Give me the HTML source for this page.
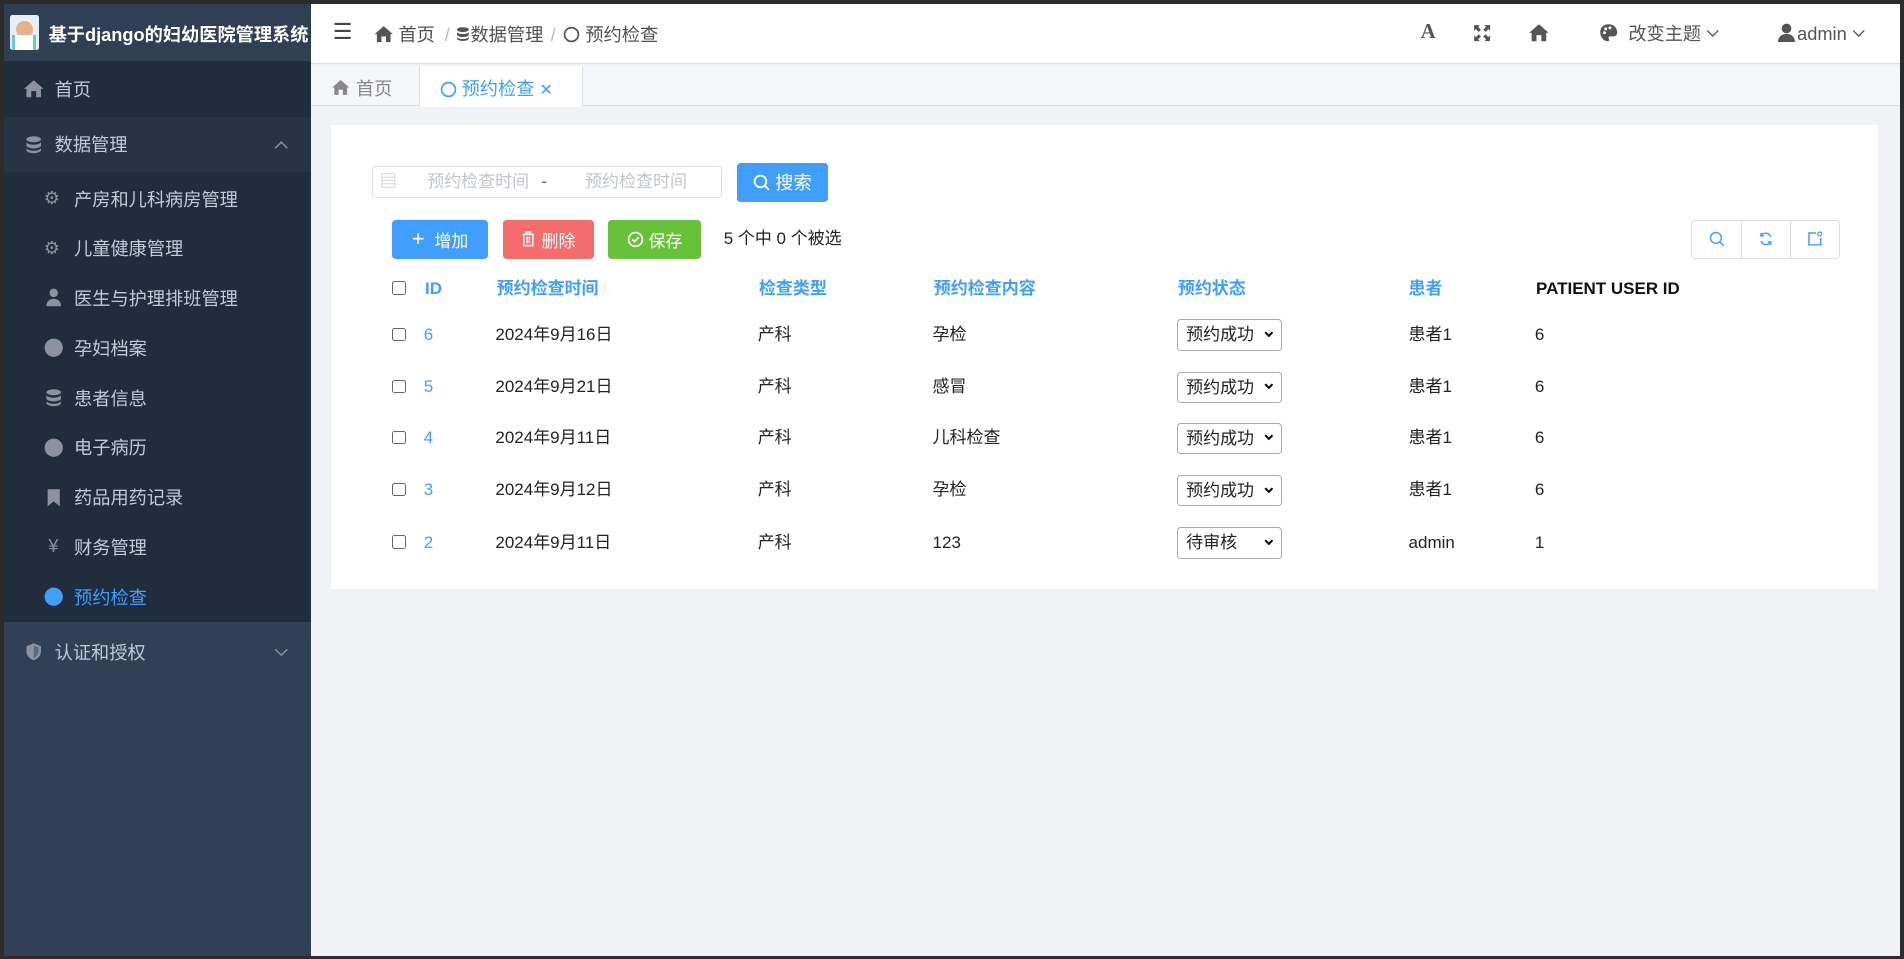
<!DOCTYPE html>
<html><head><meta charset="utf-8"><style>
*{box-sizing:border-box;margin:0;padding:0}
html,body{width:1904px;height:959px;overflow:hidden;background:#2b2b2b}
body{font-family:"Liberation Sans","Noto Sans CJK SC",sans-serif}
#w{zoom:1.21428;width:1568px;height:790px;position:relative}
.a{position:absolute}
.side{left:3px;top:3px;width:253px;height:784px;background:#304156}
.mi{position:absolute;left:0;width:253px;color:#bfcbd9;font-size:15px;display:flex;align-items:center}
.sub{left:0;width:253px;font-size:15px;color:#bfcbd9;position:absolute;display:flex;align-items:center;padding-left:33px;height:41px}
.ic{width:16px;height:16px;display:inline-block;margin-right:9px;color:#8b93a1;line-height:16px}
.main{left:256px;top:3px;width:1309px;height:784px;background:#f0f2f5}
.bc{font-size:15px;color:#505050}
.btn{position:absolute;top:181px;height:32px;color:#fff;font-size:14px;display:flex;align-items:center;justify-content:center;border-radius:3px}
.row{position:absolute;left:0;width:1274px;font-size:14px;color:#222;height:20px}
.row span{position:absolute;top:0;line-height:20px;height:20px;white-space:nowrap}
.sel{position:absolute;left:696px;top:-3px;width:87px;height:26px;border:1px solid #aaa;border-radius:3px;font-size:14px;line-height:24px;padding-left:7px;background:#fff}
.sel svg{position:absolute;right:6px;top:9px}
.cb{width:11px;height:11px;border:1px solid #666;border-radius:2px;display:inline-block;vertical-align:middle;margin-top:-2px}
.chev{display:inline-block;vertical-align:2px;margin-left:4px}
</style></head><body><div id="w">
<div class="a side">
 <div class="a" style="left:0;top:0;width:253px;height:47px;background:#2f4055"></div>
 <div class="a" style="left:5px;top:9px;width:24px;height:29px;background:#e8eef2;border-radius:2px;overflow:hidden"><div class="a" style="left:5px;top:5px;width:14px;height:14px;border-radius:50%;background:#e3b38d"></div><div class="a" style="left:2px;top:17px;width:20px;height:14px;background:#fff;border-left:3px solid #6cc;border-right:3px solid #6cc"></div></div>
 <div class="a" style="left:37px;top:14px;color:#fff;font-weight:bold;font-size:15px;white-space:nowrap">基于django的妇幼医院管理系统</div>
 <div class="mi" style="top:47px;height:46px;background:#1f2d3d;padding-left:17px"><svg class="ic" viewBox="0 0 16 16"><path d="M8 1L0 8h2v7h4v-5h4v5h4V8h2z" fill="#8b93a1"/></svg>首页</div>
 <div class="mi" style="top:93px;height:46px;background:#263445;padding-left:17px"><svg class="ic" viewBox="0 0 16 16"><ellipse cx="8" cy="3.5" rx="6" ry="2.5" fill="#8b93a1"/><path d="M2 5.5v3c0 1.4 2.7 2.5 6 2.5s6-1.1 6-2.5v-3c0 1.4-2.7 2.5-6 2.5S2 7 2 5.5zM2 10.5v2c0 1.4 2.7 2.5 6 2.5s6-1.1 6-2.5v-2c0 1.4-2.7 2.5-6 2.5s-6-1.1-6-2.5z" fill="#8b93a1"/></svg>数据管理<svg class="a" style="right:18px;top:20px" width="12" height="7" viewBox="0 0 12 7"><path d="M1 6l5-5 5 5" fill="none" stroke="#8b93a1" stroke-width="1.2"/></svg></div>
 <div class="a" style="left:0;top:139px;width:253px;height:370px;background:#1f2d3d"></div>
 <div class="sub" style="top:140px"><span class="ic">⚙</span>产房和儿科病房管理</div>
 <div class="sub" style="top:181px"><span class="ic">⚙</span>儿童健康管理</div>
 <div class="sub" style="top:222px"><svg class="ic" viewBox="0 0 16 16"><circle cx="8" cy="4" r="3.5" fill="#8b93a1"/><path d="M2 15c0-4 2.5-6 6-6s6 2 6 6z" fill="#8b93a1"/></svg>医生与护理排班管理</div>
 <div class="sub" style="top:263px"><svg class="ic" viewBox="0 0 16 16"><circle cx="8" cy="8" r="7.5" fill="#8b93a1"/></svg>孕妇档案</div>
 <div class="sub" style="top:304px"><svg class="ic" viewBox="0 0 16 16"><ellipse cx="8" cy="3.5" rx="6" ry="2.5" fill="#8b93a1"/><path d="M2 5.5v3c0 1.4 2.7 2.5 6 2.5s6-1.1 6-2.5v-3c0 1.4-2.7 2.5-6 2.5S2 7 2 5.5zM2 10.5v2c0 1.4 2.7 2.5 6 2.5s6-1.1 6-2.5v-2c0 1.4-2.7 2.5-6 2.5s-6-1.1-6-2.5z" fill="#8b93a1"/></svg>患者信息</div>
 <div class="sub" style="top:345px"><svg class="ic" viewBox="0 0 16 16"><circle cx="8" cy="8" r="7.5" fill="#8b93a1"/></svg>电子病历</div>
 <div class="sub" style="top:386px"><svg class="ic" viewBox="0 0 16 16"><path d="M3 1h10v14l-5-4-5 4z" fill="#8b93a1"/></svg>药品用药记录</div>
 <div class="sub" style="top:427px"><span class="ic" style="text-align:center">¥</span>财务管理</div>
 <div class="sub" style="top:468px;color:#409eff"><svg class="ic" viewBox="0 0 16 16"><circle cx="8" cy="8" r="7.5" fill="#409eff"/></svg>预约检查</div>
 <div class="mi" style="top:509px;height:50px;padding-left:17px"><svg class="ic" viewBox="0 0 16 16"><path d="M8 1l6 2.5v4c0 4-3 6.5-6 7.5-3-1-6-3.5-6-7.5v-4z" fill="#8b93a1"/><path d="M8 3v10.5c2-1 4-3 4-6v-3z" fill="#304156" opacity=".5"/></svg>认证和授权<svg class="a" style="right:18px;top:22px" width="12" height="7" viewBox="0 0 12 7"><path d="M1 1l5 5 5-5" fill="none" stroke="#8b93a1" stroke-width="1.2"/></svg></div>
</div>
<div class="a main">
 <div class="a" style="left:0;top:0;width:1309px;height:50px;background:#fff;border-bottom:1px solid #dcdfe6"></div>
 <div class="a" style="left:18px;top:13px;font-size:18px;color:#444">☰</div>
 <div class="a bc" style="left:52px;top:14px;white-space:nowrap"><svg width="16" height="15" viewBox="0 0 16 16" style="vertical-align:-2px"><path d="M8 1L0 8h2v7h4v-5h4v5h4V8h2z" fill="#555"/></svg> 首页 <span style="color:#bbb;margin:0 4px">/</span><svg width="13" height="15" viewBox="0 0 16 16" style="vertical-align:-2px"><ellipse cx="8" cy="3.5" rx="6" ry="2.5" fill="#555"/><path d="M2 5.5v3c0 1.4 2.7 2.5 6 2.5s6-1.1 6-2.5v-3c0 1.4-2.7 2.5-6 2.5S2 7 2 5.5zM2 10.5v2c0 1.4 2.7 2.5 6 2.5s6-1.1 6-2.5v-2c0 1.4-2.7 2.5-6 2.5s-6-1.1-6-2.5z" fill="#555"/></svg>数据管理 <span style="color:#bbb;margin:0 2px">/</span> <svg width="14" height="14" viewBox="0 0 16 16" style="vertical-align:-2px"><circle cx="8" cy="8" r="6.5" fill="none" stroke="#555" stroke-width="1.6"/></svg> 预约检查</div>
 <div class="a" style="left:914px;top:14px;font:bold 17px 'Liberation Serif',serif;color:#555">A</div>
 <svg class="a" style="left:957px;top:17px" width="15" height="15" viewBox="0 0 16 16"><path d="M1 1h5L4.5 2.5 7 5 5 7 2.5 4.5 1 6zM15 1v5l-1.5-1.5L11 7 9 5l2.5-2.5L10 1zM1 15v-5l1.5 1.5L5 9l2 2-2.5 2.5L6 15zM15 15h-5l1.5-1.5L9 11l2-2 2.5 2.5L15 10z" fill="#555"/></svg>
 <svg class="a" style="left:1002px;top:16px" width="18" height="16" viewBox="0 0 16 16"><path d="M8 1L0 8h2v7h4v-5h4v5h4V8h2z" fill="#555"/></svg>
 <svg class="a" style="left:1061px;top:16px" width="16" height="16" viewBox="0 0 16 16"><path d="M8 1C3.5 1 1 4 1 7.5S3.5 15 7 15c1.5 0 1.5-1 1-2s0-2 1.5-2H12c2 0 3-1.5 3-3.5C15 4 12 1 8 1z" fill="#555"/><circle cx="4.5" cy="8" r="1.2" fill="#fff"/><circle cx="5.5" cy="4.8" r="1.2" fill="#fff"/><circle cx="9" cy="4" r="1.2" fill="#fff"/></svg>
 <div class="a" style="left:1085px;top:15px;font-size:15px;color:#555;line-height:20px">改变主题<svg class="chev" width="11" height="7" viewBox="0 0 12 7"><path d="M1 1l5 5 5-5" fill="none" stroke="#555" stroke-width="1.2"/></svg></div>
 <svg class="a" style="left:1208px;top:16px" width="14" height="16" viewBox="0 0 14 16"><circle cx="7" cy="4.5" r="4" fill="#555"/><path d="M0 16c0-4.5 3-7 7-7s7 2.5 7 7z" fill="#555"/></svg>
 <div class="a" style="left:1224px;top:15px;font-size:15px;color:#555;line-height:20px">admin<svg class="chev" width="11" height="7" viewBox="0 0 12 7"><path d="M1 1l5 5 5-5" fill="none" stroke="#555" stroke-width="1.2"/></svg></div>
 <div class="a" style="left:0;top:51px;width:1309px;height:33px;background:#f5f6f9;border-bottom:1px solid #dcdfe6"></div>
 <div class="a" style="left:0;top:51px;width:90px;height:33px;border-right:1px solid #dcdfe6;font-size:15px;color:#888;padding:8px 0 0 17px"><svg width="16" height="14" viewBox="0 0 16 16" style="vertical-align:-1px"><path d="M8 1L0 8h2v7h4v-5h4v5h4V8h2z" fill="#888"/></svg> 首页</div>
 <div class="a" style="left:90px;top:51px;width:134px;height:34px;background:#fff;border-right:1px solid #dcdfe6;font-size:15px;color:#409eff;padding:8px 0 0 16px"><svg width="14" height="14" viewBox="0 0 16 16" style="vertical-align:-2px"><circle cx="8" cy="8" r="6.5" fill="none" stroke="#409eff" stroke-width="1.6"/></svg> 预约检查 <span style="font-size:13px">✕</span></div>
 <div class="a" style="left:17px;top:100px;width:1274px;height:382px;background:#fff">
  <div class="a" style="left:33px;top:34px;width:289px;height:26px;border:1px solid #dcdfe6;border-radius:3px;font-size:14px;color:#c0c4cc;line-height:24px">
   <span class="a" style="left:6px;top:0">▤</span><span class="a" style="left:45px;top:0;width:84px;overflow:hidden;white-space:nowrap">预约检查时间</span><span class="a" style="left:139px;top:0;color:#555">-</span><span class="a" style="left:175px;top:0;width:84px;overflow:hidden;white-space:nowrap">预约检查时间</span>
  </div>
  <div class="btn" style="left:334px;top:31px;width:75px;height:32px;background:#409eff;font-size:15px"><svg width="14" height="14" viewBox="0 0 16 16" style="margin-right:4px"><circle cx="7" cy="7" r="5.5" fill="none" stroke="#fff" stroke-width="1.7"/><path d="M11 11l4 4" stroke="#fff" stroke-width="1.7"/></svg>搜索</div>
  <div class="btn" style="left:50px;top:78px;width:79px;background:#409eff"><span style="font-size:18px;margin-right:8px;font-weight:300">+</span>增加</div>
  <div class="btn" style="left:141px;top:78px;width:75px;background:#f56c6c"><svg width="12" height="13" viewBox="0 0 12 14" style="margin-right:5px"><path d="M1 3h10M4 3V1h4v2M2 3v10h8V3M5 5v6M7 5v6" fill="none" stroke="#fff" stroke-width="1.3"/></svg>删除</div>
  <div class="btn" style="left:228px;top:78px;width:76px;background:#67c23a"><svg width="14" height="14" viewBox="0 0 16 16" style="margin-right:4px"><circle cx="8" cy="8" r="6.5" fill="none" stroke="#fff" stroke-width="1.5"/><path d="M5 8l2 2 4-4" fill="none" stroke="#fff" stroke-width="1.5"/></svg>保存</div>
  <div class="a" style="left:323px;top:84px;font-size:14px;color:#222;line-height:20px">5 个中 0 个被选</div>
  <div class="a" style="left:1120px;top:78px;width:122px;height:32px;border:1px solid #dcdfe6;border-radius:3px;display:flex">
   <div style="flex:1;border-right:1px solid #dcdfe6;display:flex;align-items:center;justify-content:center"><svg width="13" height="13" viewBox="0 0 16 16"><circle cx="7" cy="7" r="5.5" fill="none" stroke="#409eff" stroke-width="1.5"/><path d="M11 11l4 4" stroke="#409eff" stroke-width="1.5"/></svg></div>
   <div style="flex:1;border-right:1px solid #dcdfe6;display:flex;align-items:center;justify-content:center"><svg width="13" height="13" viewBox="0 0 16 16"><path d="M13 6A5.5 5.5 0 0 0 3 5M3 10a5.5 5.5 0 0 0 10 1" fill="none" stroke="#409eff" stroke-width="1.5"/><path d="M3 2v3h3M13 14v-3h-3" fill="none" stroke="#409eff" stroke-width="1.5"/></svg></div>
   <div style="flex:1;display:flex;align-items:center;justify-content:center"><svg width="13" height="13" viewBox="0 0 16 16"><path d="M9 2H2v12h12V7" fill="none" stroke="#409eff" stroke-width="1.5"/><circle cx="13" cy="3" r="2" fill="none" stroke="#409eff" stroke-width="1.3"/></svg></div>
  </div>
  <div class="row" style="top:125px;font-weight:bold;color:#409eff">
   <span style="left:50px"><i class="cb"></i></span><span style="left:77px">ID</span><span style="left:136px">预约检查时间</span><span style="left:352px">检查类型</span><span style="left:496px">预约检查内容</span><span style="left:697px">预约状态</span><span style="left:887px">患者</span><span style="left:992px;color:#111">PATIENT USER ID</span>
  </div>
  <div class="row" style="top:163px"><span style="left:50px"><i class="cb"></i></span><span style="left:76px;color:#409eff">6</span><span style="left:135px">2024年9月16日</span><span style="left:351px">产科</span><span style="left:495px">孕检</span><div class="sel">预约成功<svg width="8" height="6" viewBox="0 0 8 6"><path d="M1 1l3 3 3-3" fill="none" stroke="#000" stroke-width="1.6"/></svg></div><span style="left:887px">患者1</span><span style="left:991px">6</span></div>
  <div class="row" style="top:206px"><span style="left:50px"><i class="cb"></i></span><span style="left:76px;color:#409eff">5</span><span style="left:135px">2024年9月21日</span><span style="left:351px">产科</span><span style="left:495px">感冒</span><div class="sel">预约成功<svg width="8" height="6" viewBox="0 0 8 6"><path d="M1 1l3 3 3-3" fill="none" stroke="#000" stroke-width="1.6"/></svg></div><span style="left:887px">患者1</span><span style="left:991px">6</span></div>
  <div class="row" style="top:248px"><span style="left:50px"><i class="cb"></i></span><span style="left:76px;color:#409eff">4</span><span style="left:135px">2024年9月11日</span><span style="left:351px">产科</span><span style="left:495px">儿科检查</span><div class="sel">预约成功<svg width="8" height="6" viewBox="0 0 8 6"><path d="M1 1l3 3 3-3" fill="none" stroke="#000" stroke-width="1.6"/></svg></div><span style="left:887px">患者1</span><span style="left:991px">6</span></div>
  <div class="row" style="top:291px"><span style="left:50px"><i class="cb"></i></span><span style="left:76px;color:#409eff">3</span><span style="left:135px">2024年9月12日</span><span style="left:351px">产科</span><span style="left:495px">孕检</span><div class="sel">预约成功<svg width="8" height="6" viewBox="0 0 8 6"><path d="M1 1l3 3 3-3" fill="none" stroke="#000" stroke-width="1.6"/></svg></div><span style="left:887px">患者1</span><span style="left:991px">6</span></div>
  <div class="row" style="top:334px"><span style="left:50px"><i class="cb"></i></span><span style="left:76px;color:#409eff">2</span><span style="left:135px">2024年9月11日</span><span style="left:351px">产科</span><span style="left:495px">123</span><div class="sel">待审核<svg width="8" height="6" viewBox="0 0 8 6"><path d="M1 1l3 3 3-3" fill="none" stroke="#000" stroke-width="1.6"/></svg></div><span style="left:887px">admin</span><span style="left:991px">1</span></div>
 </div>
</div>
</div></body></html>
